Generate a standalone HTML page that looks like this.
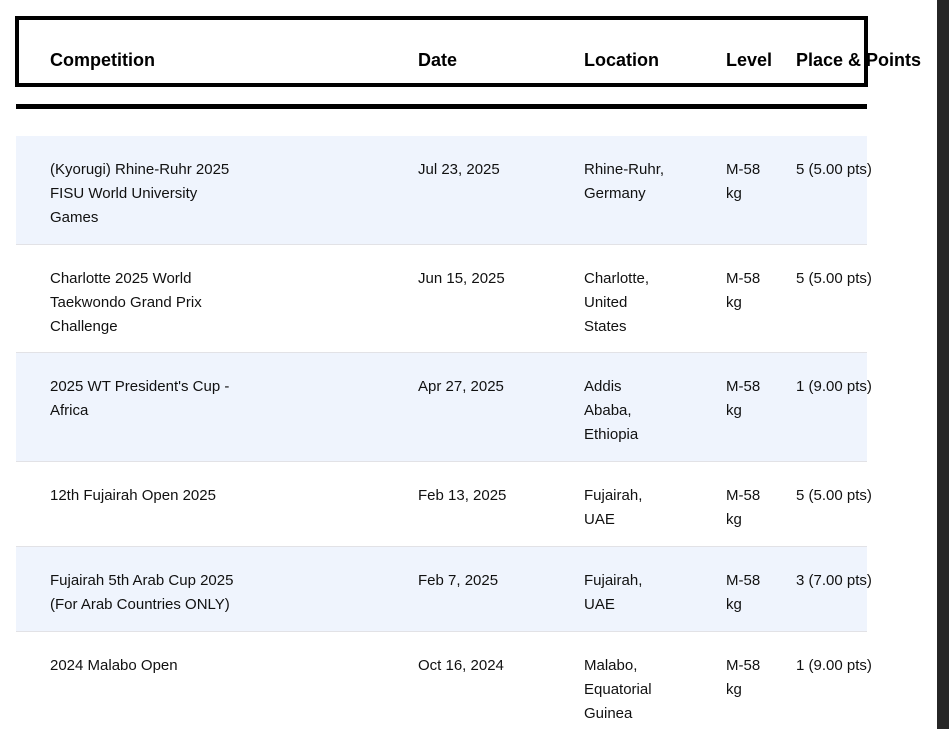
<!DOCTYPE html>
<html><head><style>
body{margin:0;background:#fff;font-family:"Liberation Sans",Arial,sans-serif;color:#111;width:949px;height:729px;overflow:hidden;position:relative}
.bar{position:absolute;left:937px;top:0;width:12px;height:729px;background:#262626}
.hbox{position:absolute;left:15px;top:16px;width:845px;height:63px;border:4px solid #000}
.h{position:absolute;top:50px;font-weight:bold;font-size:18px;line-height:20px;white-space:nowrap;color:#000}
.line{position:absolute;left:16px;top:104px;width:851px;height:5px;background:#000}
.row{position:absolute;left:16px;width:851px;border-bottom:1px solid #e2e2e6;font-size:15px;line-height:24px}
.row.a{background:#eff4fd}
.row div{position:absolute;top:22px;white-space:nowrap}
.c1{left:34px}.c2{left:402px}.c3{left:568px}.c4{left:710px}.c5{left:780px}
</style></head><body>
<div class="bar"></div>
<div class="hbox"></div>
<div class="h" style="left:50px">Competition</div>
<div class="h" style="left:418px">Date</div>
<div class="h" style="left:584px">Location</div>
<div class="h" style="left:726px">Level</div>
<div class="h" style="left:796px">Place &amp; Points</div>
<div class="line"></div>

<div class="row a" style="top:136px;height:108px">
<div class="c1">(Kyorugi) Rhine-Ruhr 2025<br>FISU World University<br>Games</div>
<div class="c2">Jul 23, 2025</div><div class="c3">Rhine-Ruhr,<br>Germany</div><div class="c4">M-58<br>kg</div><div class="c5">5 (5.00 pts)</div></div>

<div class="row" style="top:245px;height:107px">
<div class="c1">Charlotte 2025 World<br>Taekwondo Grand Prix<br>Challenge</div>
<div class="c2">Jun 15, 2025</div><div class="c3">Charlotte,<br>United<br>States</div><div class="c4">M-58<br>kg</div><div class="c5">5 (5.00 pts)</div></div>

<div class="row a" style="top:353px;height:108px">
<div class="c1">2025 WT President's Cup -<br>Africa</div>
<div class="c2">Apr 27, 2025</div><div class="c3">Addis<br>Ababa,<br>Ethiopia</div><div class="c4">M-58<br>kg</div><div class="c5">1 (9.00 pts)</div></div>

<div class="row" style="top:462px;height:84px">
<div class="c1">12th Fujairah Open 2025</div>
<div class="c2">Feb 13, 2025</div><div class="c3">Fujairah,<br>UAE</div><div class="c4">M-58<br>kg</div><div class="c5">5 (5.00 pts)</div></div>

<div class="row a" style="top:547px;height:84px">
<div class="c1">Fujairah 5th Arab Cup 2025<br>(For Arab Countries ONLY)</div>
<div class="c2">Feb 7, 2025</div><div class="c3">Fujairah,<br>UAE</div><div class="c4">M-58<br>kg</div><div class="c5">3 (7.00 pts)</div></div>

<div class="row" style="top:632px;height:120px;border:none">
<div class="c1">2024 Malabo Open</div>
<div class="c2">Oct 16, 2024</div><div class="c3">Malabo,<br>Equatorial<br>Guinea</div><div class="c4">M-58<br>kg</div><div class="c5">1 (9.00 pts)</div></div>
</body></html>
